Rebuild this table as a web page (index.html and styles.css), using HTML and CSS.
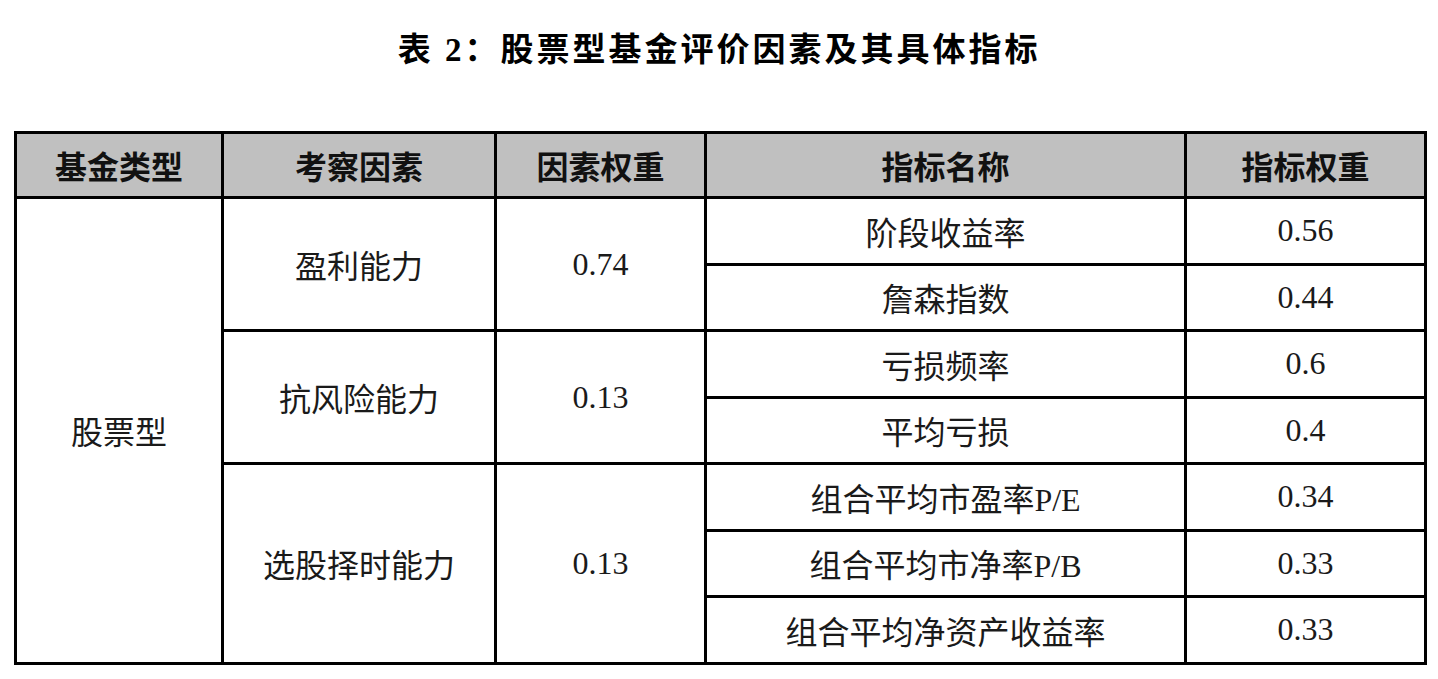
FILE: index.html
```html
<!DOCTYPE html>
<html lang="zh-CN">
<head>
<meta charset="utf-8">
<link rel="stylesheet" href="styles.css">
</head>
<body>
<h1 class="title">表 2：股票型基金评价因素及其具体指标</h1>
<table class="grid">
  <colgroup>
    <col class="c1"><col class="c2"><col class="c3"><col class="c4"><col class="c5">
  </colgroup>
  <thead>
    <tr><th>基金类型</th><th>考察因素</th><th>因素权重</th><th>指标名称</th><th>指标权重</th></tr>
  </thead>
  <tbody>
    <tr><td rowspan="7">股票型</td><td rowspan="2">盈利能力</td><td rowspan="2">0.74</td><td>阶段收益率</td><td>0.56</td></tr>
    <tr><td>詹森指数</td><td>0.44</td></tr>
    <tr><td rowspan="2">抗风险能力</td><td rowspan="2">0.13</td><td>亏损频率</td><td>0.6</td></tr>
    <tr><td>平均亏损</td><td>0.4</td></tr>
    <tr><td rowspan="3">选股择时能力</td><td rowspan="3">0.13</td><td>组合平均市盈率P/E</td><td>0.34</td></tr>
    <tr><td>组合平均市净率P/B</td><td>0.33</td></tr>
    <tr><td>组合平均净资产收益率</td><td>0.33</td></tr>
  </tbody>
</table>
</body>
</html>
```
FILE: styles.css
```css
html, body {
  margin: 0;
  padding: 0;
  background: #ffffff;
}
body {
  padding: 0 14px;
  color: #1a1a1a;
  font-family: "Liberation Serif", "Noto Sans CJK SC", serif;
}
.title {
  margin: 0;
  padding-top: 30px;
  height: 131px;
  box-sizing: border-box;
  text-align: center;
  font-family: "Liberation Serif", "Noto Sans CJK SC", sans-serif;
  font-size: 33px;
  font-weight: 700;
  letter-spacing: 3px;
  line-height: 40px;
  color: #000;
}
.grid {
  width: 1410px;
  border-collapse: collapse;
  table-layout: fixed;
  border: 3px solid #000;
}
.c1 { width: 207px; }
.c2 { width: 273px; }
.c3 { width: 210px; }
.c4 { width: 480px; }
.c5 { width: 240px; }
.grid th, .grid td {
  border: 3px solid #000;
  text-align: center;
  vertical-align: middle;
  padding: 0;
  font-size: 32px;
  font-weight: 400;
}
.grid th {
  background: #c0c0c0;
  font-weight: 700;
  height: 62px;
  font-family: "Noto Sans CJK SC", sans-serif;
  font-size: 32px;
  color: #111;
}
.grid td {
  height: 63.5px;
}
```
